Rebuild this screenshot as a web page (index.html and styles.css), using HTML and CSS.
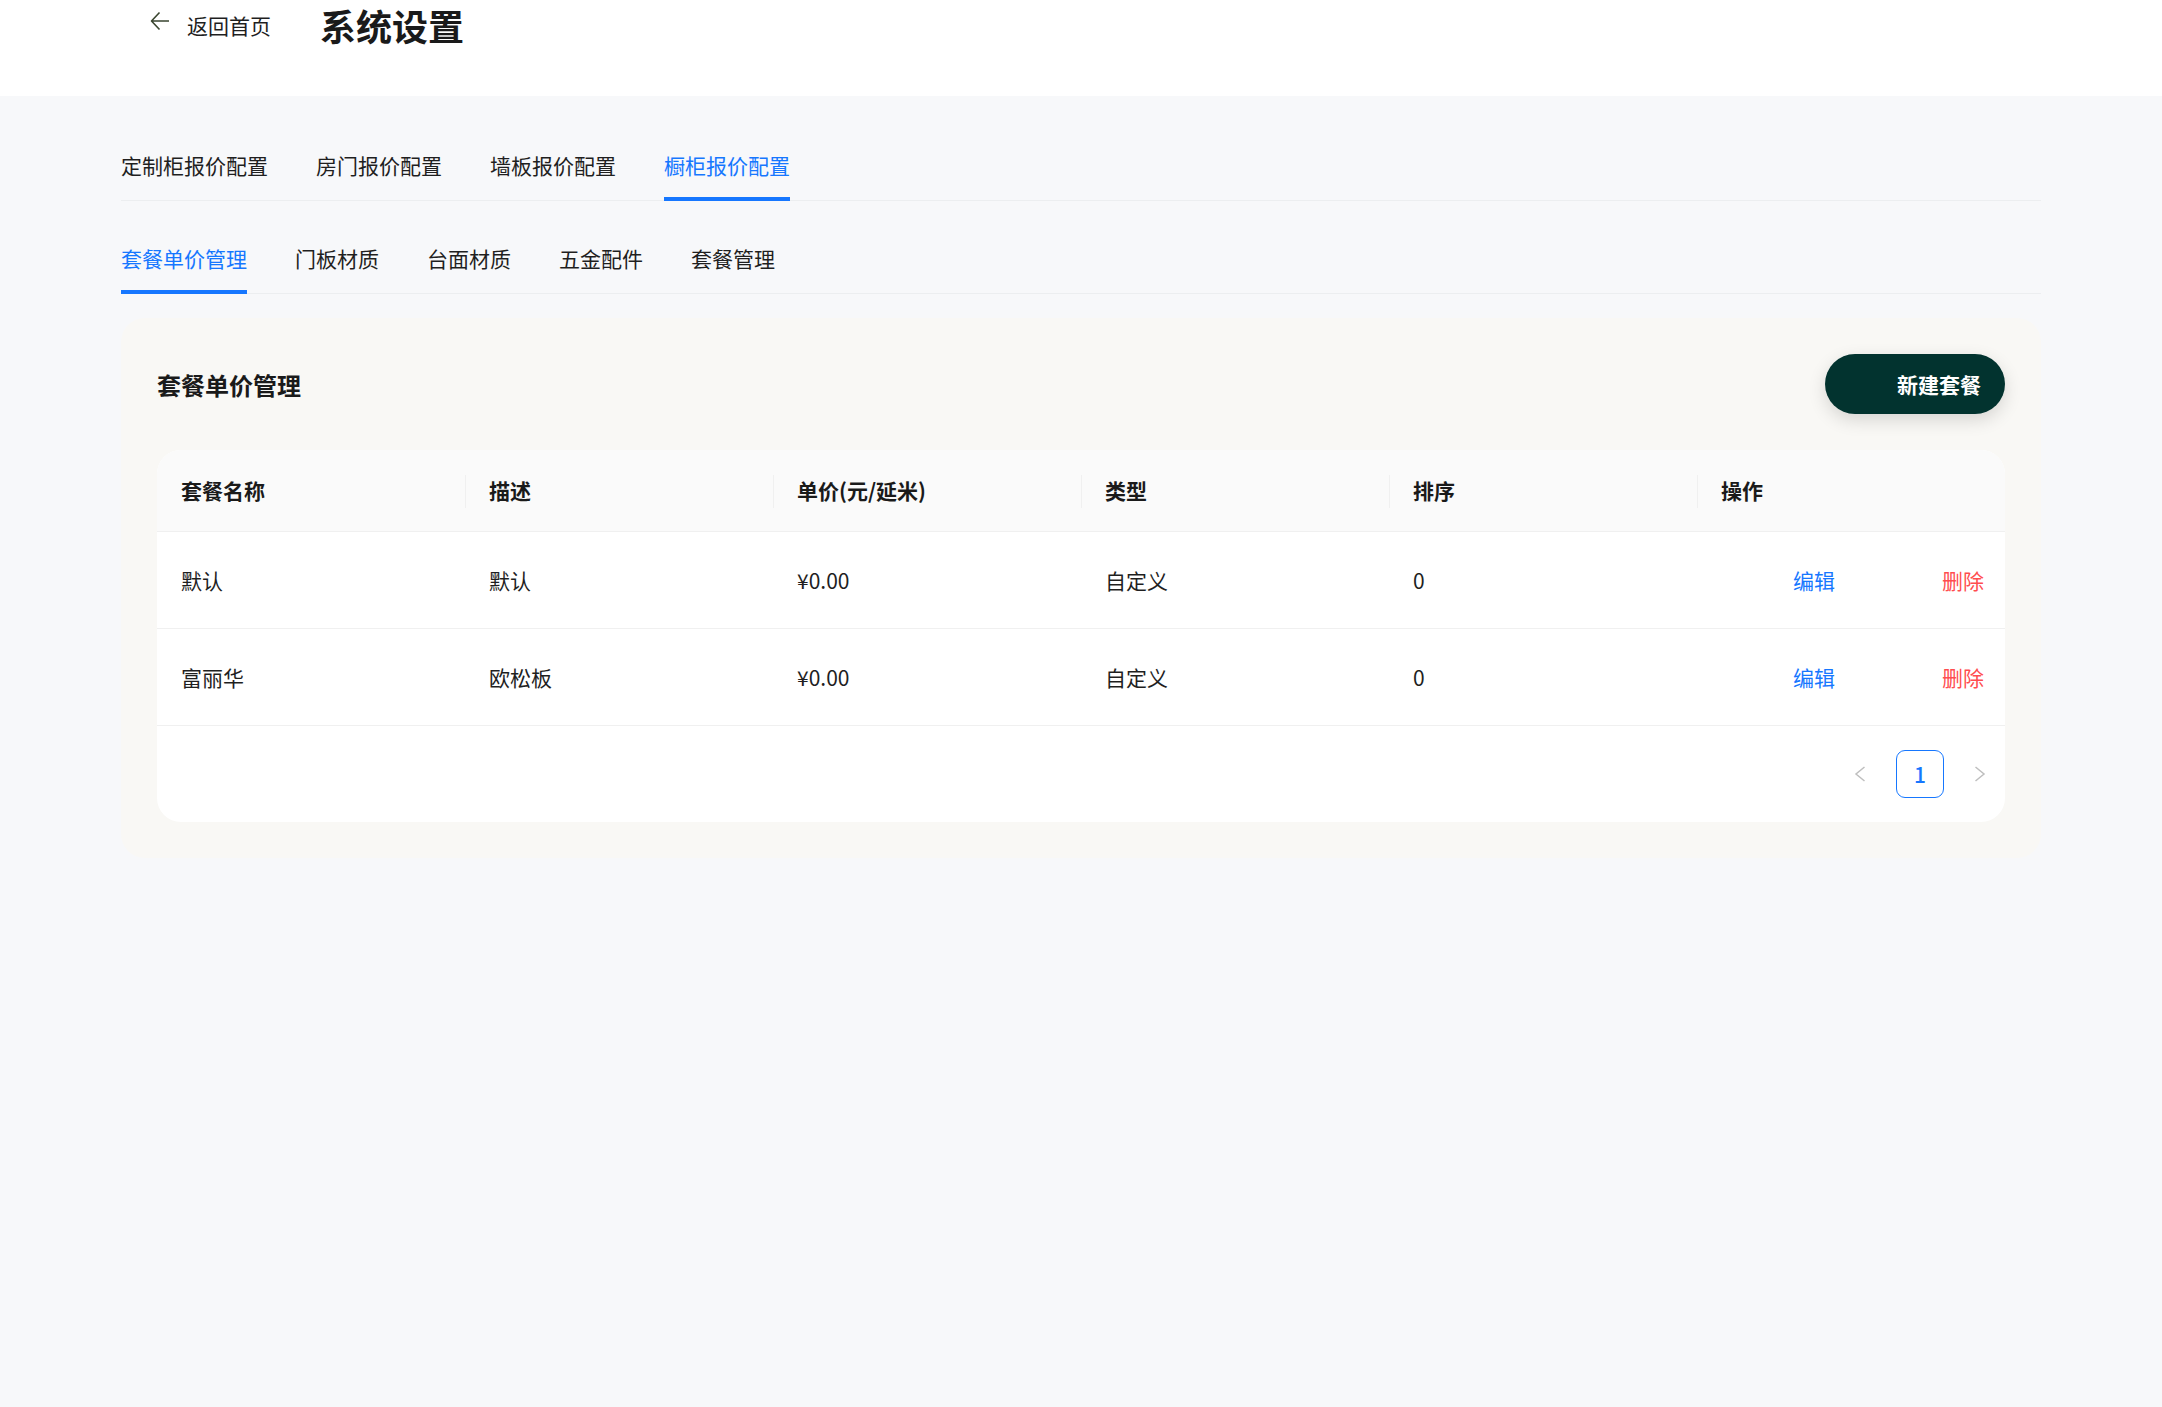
FILE: index.html
```html
<!DOCTYPE html>
<html lang="zh-CN">
<head>
    <meta charset="UTF-8">
    <meta name="viewport" content="width=device-width, initial-scale=1.0">
    <title>系统设置</title>
    <link rel="stylesheet" href="styles.css">
</head>
<body>
    <!-- Top bar -->
    <header class="topbar">
        <div class="topbar-inner">
            <a class="back-link" href="#">
                <svg class="back-icon" viewBox="0 0 20 20" width="20" height="20">
                    <path d="M19 10H1.5M9.5 1.5L1.5 10L9.5 18.5" fill="none" stroke="currentColor" stroke-width="1.6" stroke-linejoin="round"/>
                </svg>
                <span>返回首页</span>
            </a>
            <h1 class="page-title">系统设置</h1>
        </div>
    </header>

    <main class="page">
        <!-- Main tabs -->
        <nav class="tabs">
            <a class="tab" href="#">定制柜报价配置</a>
            <a class="tab" href="#">房门报价配置</a>
            <a class="tab" href="#">墙板报价配置</a>
            <a class="tab active" href="#">橱柜报价配置</a>
        </nav>

        <!-- Sub tabs -->
        <nav class="tabs sub-tabs">
            <a class="tab active" href="#">套餐单价管理</a>
            <a class="tab" href="#">门板材质</a>
            <a class="tab" href="#">台面材质</a>
            <a class="tab" href="#">五金配件</a>
            <a class="tab" href="#">套餐管理</a>
        </nav>

        <section class="card">
            <div class="card-head">
                <h2 class="card-title">套餐单价管理</h2>
                <button class="btn-new">新建套餐</button>
            </div>

            <div class="table-panel">
                <table class="price-table">
                    <thead>
                        <tr>
                            <th>套餐名称</th>
                            <th>描述</th>
                            <th>单价(元/延米)</th>
                            <th>类型</th>
                            <th>排序</th>
                            <th>操作</th>
                        </tr>
                    </thead>
                    <tbody>
                        <tr>
                            <td>默认</td>
                            <td>默认</td>
                            <td>¥0.00</td>
                            <td>自定义</td>
                            <td>0</td>
                            <td class="actions-cell">
                                <div class="actions">
                                    <a class="link-edit" href="#">编辑</a>
                                    <a class="link-delete" href="#">删除</a>
                                </div>
                            </td>
                        </tr>
                        <tr>
                            <td>富丽华</td>
                            <td>欧松板</td>
                            <td>¥0.00</td>
                            <td>自定义</td>
                            <td>0</td>
                            <td class="actions-cell">
                                <div class="actions">
                                    <a class="link-edit" href="#">编辑</a>
                                    <a class="link-delete" href="#">删除</a>
                                </div>
                            </td>
                        </tr>
                    </tbody>
                </table>

                <!-- Pagination -->
                <div class="pager">
                    <span class="pager-item pager-arrow">
                        <svg viewBox="0 0 12 16" width="12" height="16"><path d="M10.5 1L2 8l8.5 7" fill="none" stroke="currentColor" stroke-width="1.5"/></svg>
                    </span>
                    <span class="pager-item current">1</span>
                    <span class="pager-item pager-arrow">
                        <svg viewBox="0 0 12 16" width="12" height="16"><path d="M1.5 1L10 8l-8.5 7" fill="none" stroke="currentColor" stroke-width="1.5"/></svg>
                    </span>
                </div>
            </div>
        </section>
    </main>
</body>
</html>
```

FILE: styles.css
```css
body {
    margin: 0;
    background-color: #f7f8fa;
    font-family: "Noto Sans CJK SC", "Noto Sans", sans-serif;
    color: #1f1f1f;
}

a {
    text-decoration: none;
    color: inherit;
}

/* Top bar */
.topbar {
    background-color: #fff;
    height: 96px;
}

.topbar-inner {
    display: flex;
    align-items: center;
    height: 50px;
    padding-left: 150px;
}

.back-link {
    display: flex;
    align-items: center;
    gap: 17px;
    font-size: 21px;
    color: #1f1f1f;
}

.back-icon {
    color: #3a4630;
    margin-top: -8px;
}

.page-title {
    margin: 0 0 0 49px;
    font-size: 36px;
    font-weight: 700;
    color: #1a1a1a;
}

/* Page container */
.page {
    width: 1920px;
    margin: 0 auto;
    padding-top: 35px;
}

/* Tabs */
.tabs {
    display: flex;
    gap: 48px;
    border-bottom: 1px solid #eceef0;
}

.sub-tabs {
    margin-top: 23px;
}

.tab {
    position: relative;
    padding: 18px 0;
    font-size: 21px;
    line-height: 33px;
    color: #1f1f1f;
}

.tab.active {
    color: #1677ff;
}

.tab.active::after {
    content: "";
    position: absolute;
    left: 0;
    right: 0;
    bottom: -1px;
    height: 4px;
    background-color: #1677ff;
}

/* Card */
.card {
    margin-top: 24px;
    background-color: #f9f8f5;
    border-radius: 24px;
    padding: 36px;
}

.card-head {
    display: flex;
    justify-content: space-between;
    align-items: center;
    height: 60px;
    margin-bottom: 36px;
}

.card-title {
    margin: 0;
    font-size: 24px;
    font-weight: 700;
    color: #1a1a1a;
}

.btn-new {
    height: 60px;
    width: 180px;
    padding: 0 24px 0 0;
    text-align: right;
    border: none;
    border-radius: 30px;
    background-color: #02332f;
    color: #fff;
    font-family: inherit;
    font-size: 21px;
    font-weight: 700;
    box-shadow: 0 6px 18px rgba(0, 0, 0, 0.14);
    cursor: pointer;
}

/* Table */
.table-panel {
    background-color: #fff;
    border-radius: 24px;
    overflow: hidden;
}

.price-table {
    width: 100%;
    border-collapse: collapse;
    table-layout: fixed;
    font-size: 21px;
}

.price-table th {
    position: relative;
    background-color: #fafafa;
    padding: 24px;
    line-height: 33px;
    text-align: left;
    font-weight: 700;
    color: #1a1a1a;
    border-bottom: 1px solid #f0f0f0;
}

.price-table th + th::before {
    content: "";
    position: absolute;
    left: 0;
    top: 50%;
    width: 1px;
    height: 33px;
    margin-top: -16px;
    background-color: #f0f0f0;
}

.price-table td {
    padding: 24px;
    line-height: 48px;
    border-bottom: 1px solid #f0f0f0;
    color: #1f1f1f;
}

.price-table td.actions-cell {
    padding-right: 21px;
}

.actions {
    display: flex;
    justify-content: flex-end;
    gap: 107px;
}

.link-edit {
    color: #1677ff;
}

.link-delete {
    color: #ff4d4f;
}

/* Pagination */
.pager {
    display: flex;
    justify-content: flex-end;
    gap: 12px;
    padding: 24px 1px 24px 0;
}

.pager-item {
    display: flex;
    align-items: center;
    justify-content: center;
    width: 48px;
    height: 48px;
    box-sizing: border-box;
    font-size: 21px;
}

.pager-arrow {
    color: #bfbfbf;
}

.pager-item.current {
    border: 1px solid #1677ff;
    border-radius: 9px;
    color: #1677ff;
    font-weight: 500;
}
```
